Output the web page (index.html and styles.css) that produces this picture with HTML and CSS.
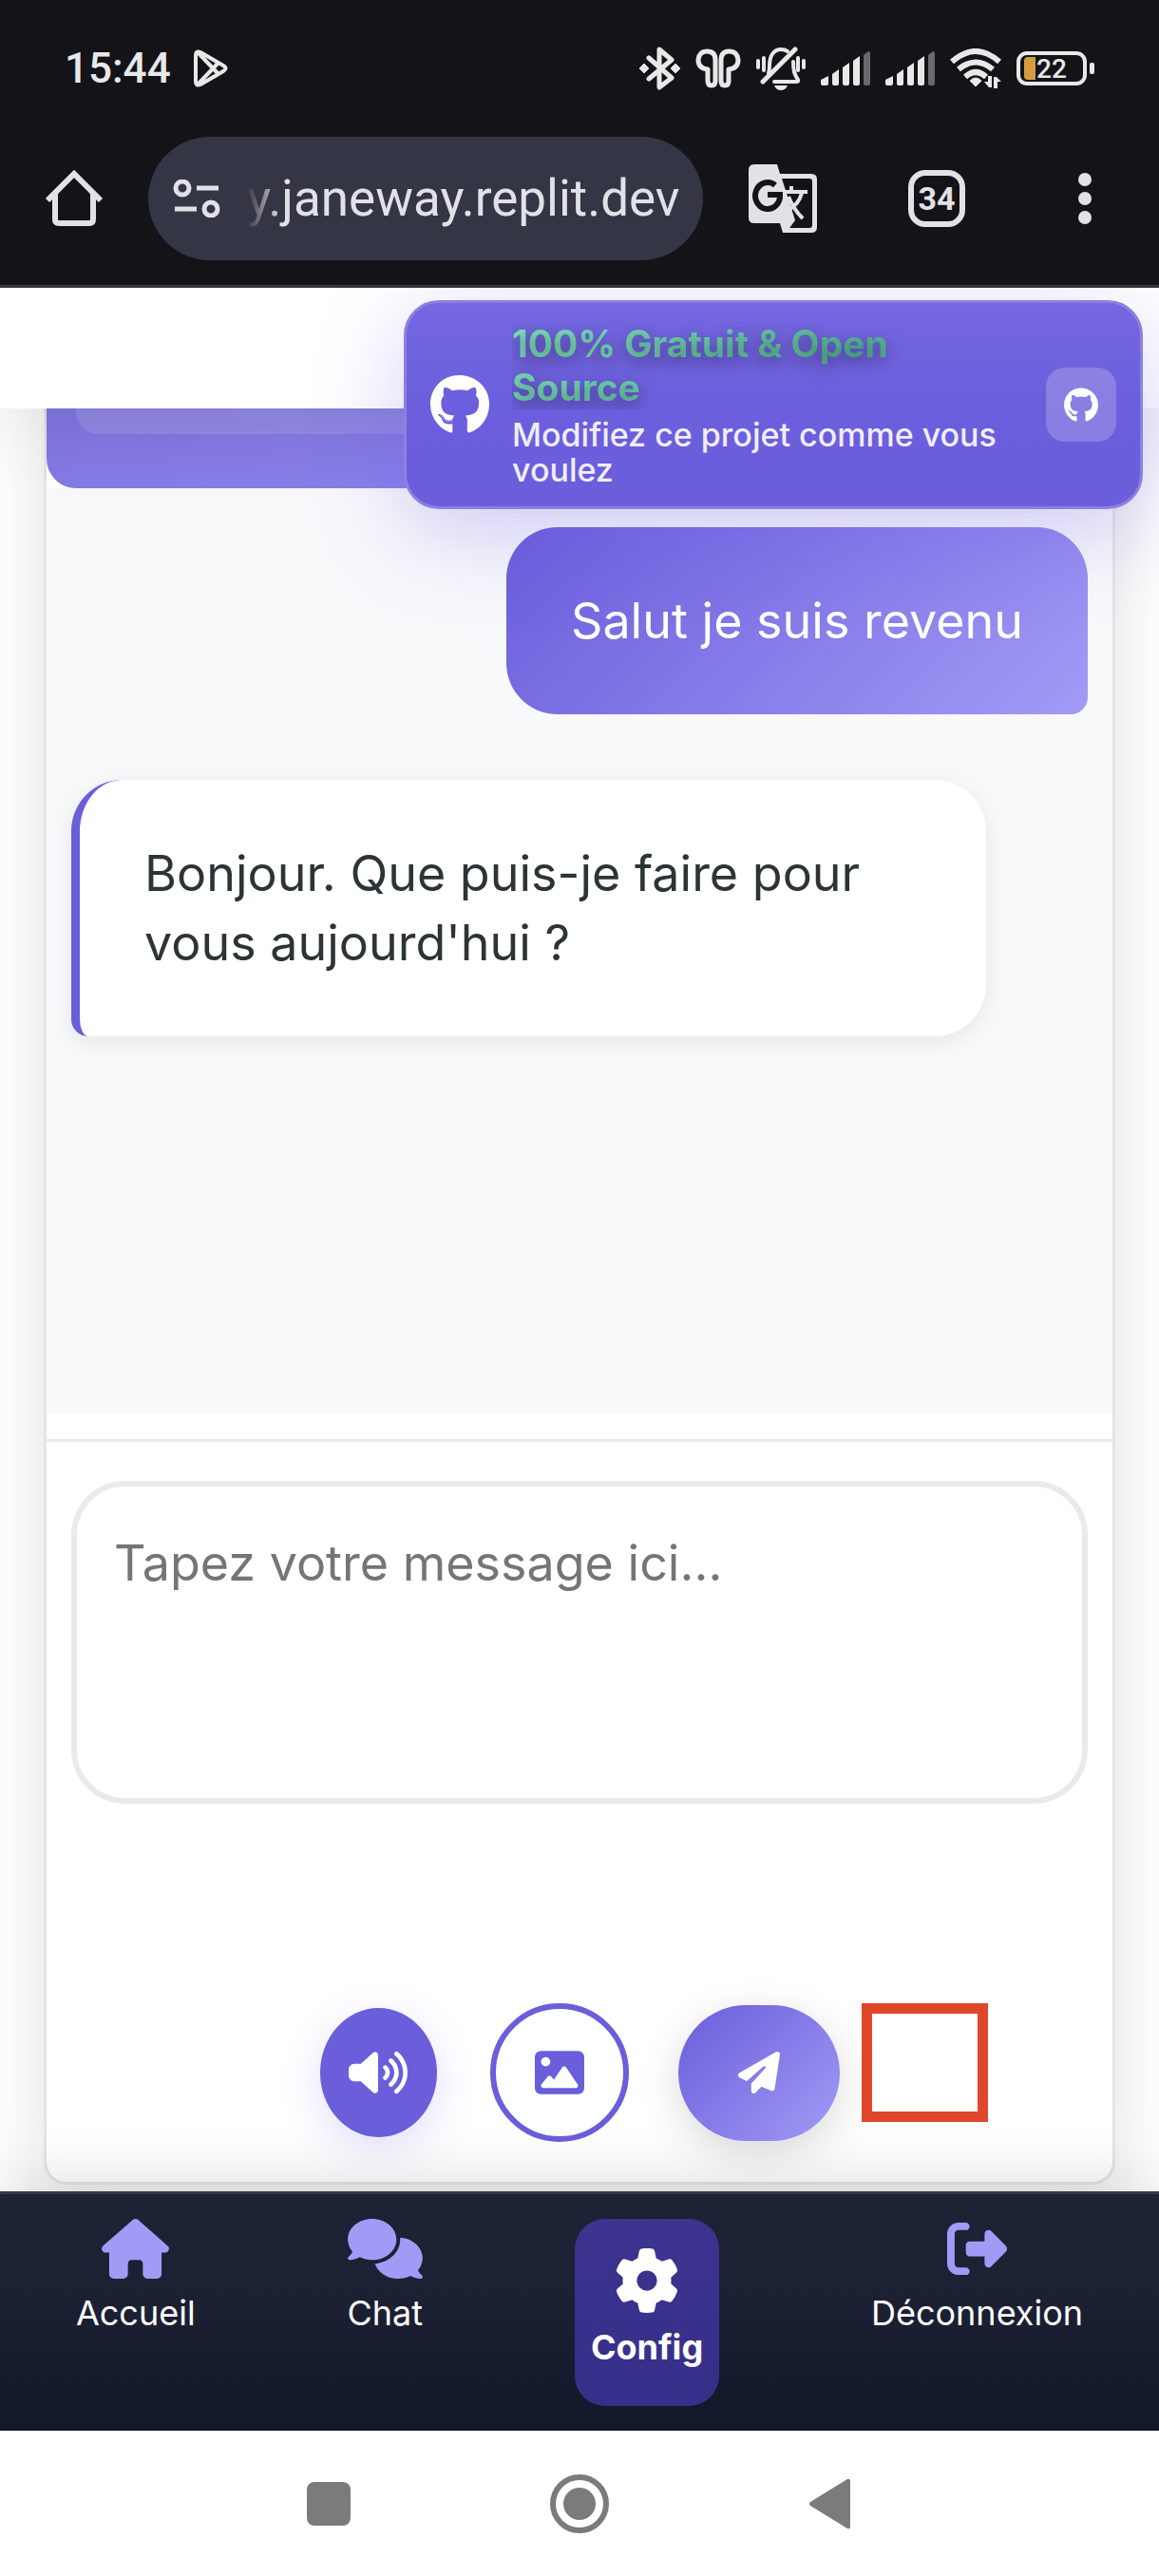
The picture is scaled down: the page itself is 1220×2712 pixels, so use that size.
FILE: index.html
```html
<!DOCTYPE html>
<html lang="fr">
<head>
<meta charset="utf-8">
<meta name="viewport" content="width=device-width, initial-scale=1">
<title>Chat</title>
<link rel="stylesheet" href="styles.css">
</head>
<body>
<svg class="sprite" aria-hidden="true">
  <symbol id="github" viewBox="0 0 496 512"><path d="M165.9 397.4c0 2-2.3 3.6-5.2 3.6-3.3.3-5.6-1.3-5.6-3.6 0-2 2.3-3.6 5.2-3.6 3-.3 5.6 1.3 5.6 3.6zm-31.1-4.5c-.7 2 1.3 4.3 4.3 4.9 2.6 1 5.6 0 6.2-2s-1.3-4.3-4.3-5.2c-2.6-.7-5.5.3-6.2 2.3zm44.2-1.7c-2.9.7-4.9 2.6-4.6 4.9.3 2 2.9 3.3 5.9 2.6 2.9-.7 4.9-2.6 4.6-4.6-.3-1.9-3-3.2-5.9-2.9zM244.8 8C106.1 8 0 113.3 0 252c0 110.9 69.8 205.8 169.5 239.2 12.8 2.3 17.3-5.6 17.3-12.1 0-6.2-.3-40.4-.3-61.4 0 0-70 15-84.7-29.8 0 0-11.4-29.1-27.8-36.6 0 0-22.9-15.7 1.6-15.4 0 0 24.9 2 38.6 25.8 21.9 38.6 58.6 27.5 72.9 20.9 2.3-16 8.8-27.1 16-33.7-55.9-6.2-112.3-14.3-112.3-110.5 0-27.5 7.6-41.3 23.6-58.9-2.6-6.5-11.1-33.3 2.6-67.9 20.9-6.5 69 27 69 27 20-5.6 41.5-8.5 62.8-8.5s42.8 2.9 62.8 8.5c0 0 48.1-33.6 69-27 13.7 34.7 5.2 61.4 2.6 67.9 16 17.7 25.8 31.5 25.8 58.9 0 96.5-58.9 104.2-114.8 110.5 9.2 7.9 17 22.9 17 46.4 0 33.7-.3 75.4-.3 83.6 0 6.5 4.6 14.4 17.3 12.1C428.2 457.8 496 362.9 496 252 496 113.3 383.5 8 244.8 8zM97.2 352.9c-1.3 1-1 3.3.7 5.2 1.6 1.6 3.9 2.3 5.2 1 1.3-1 1-3.3-.7-5.2-1.6-1.6-3.9-2.3-5.2-1zm-10.8-8.1c-.7 1.3.3 2.9 2.3 3.9 1.6 1 3.6.7 4.3-.7.7-1.3-.3-2.9-2.3-3.9-2-.6-3.6-.3-4.3.7zm32.4 35.6c-1.6 1.3-1 4.3 1.3 6.2 2.3 2.3 5.2 2.6 6.5 1 1.3-1.3.7-4.3-1.3-6.2-2.2-2.3-5.2-2.6-6.5-1zm-11.4-14.7c-1.6 1-1.6 3.6 0 5.9 1.6 2.3 4.3 3.3 5.6 2.3 1.6-1.3 1.6-3.9 0-6.2-1.4-2.3-4-3.3-5.6-2z"/></symbol>
  <symbol id="signal" viewBox="0 0 52 36"><path d="M0 30l8-4v8q0 2-2 2H2q-2 0-2-2zM12 24l7-5v15q0 2-2 2h-3q-2 0-2-2zM23 17l7-5v22q0 2-2 2h-3q-2 0-2-2zM34 10l7-5v29q0 2-2 2h-3q-2 0-2-2z"/><path opacity=".4" d="M45 4l5-4q2 0 2 2v32q0 2-2 2h-3q-2 0-2-2z"/></symbol>
</svg>

<header class="status">
  <div class="status__left">
    <time class="status__time">15:44</time>
    <svg class="status__play" viewBox="0 0 36 40" fill="none" stroke="currentColor" stroke-width="4" stroke-linejoin="round" stroke-linecap="round"><path d="M2 6q0-5 5-3l24 14q5 3 0 6L7 37q-5 2-5-3zM4 3l21 22M4 37l21-22"/></svg>
  </div>
  <div class="status__icons">
    <svg width="43" height="46" viewBox="0 0 43 46"><path fill="none" stroke="currentColor" stroke-width="5" stroke-linejoin="round" stroke-linecap="round" d="M10 12l24 21-13 10V3l13 11L10 34"/><path d="M0 23l5-5 5 5-5 5zM33 23l5-5 5 5-5 5z" stroke="currentColor" stroke-width="1" stroke-linejoin="round"/></svg>
    <svg width="48" height="42" viewBox="0 0 48 42" fill="none" stroke="currentColor" stroke-width="5" stroke-linejoin="round"><path d="M13 22Q3 21 3 12 4 3 12 3q9 0 9 9v22q0 5-4 5t-4-5zM35 22q10-1 10-10Q44 3 36 3q-9 0-9 9v22q0 5 4 5t4-5z"/></svg>
    <svg width="52" height="46" viewBox="0 0 52 46" fill="none" stroke="currentColor" stroke-width="5" stroke-linecap="round" stroke-linejoin="round"><path d="M7 37L41 3"/><path stroke-width="4" d="M13 28q1-3 1-8C14 9 19 3 26 3q4 0 7 2M39 16c0 9 1 13 5 19q1 2-2 2H19"/><path stroke-width="4" d="M2 15v7M8 12v13M44 12v13M50 15v7"/><path fill="currentColor" stroke="none" d="M19 41h14q-2 5-7 5t-7-5z"/></svg>
    <svg width="52" height="36"><use href="#signal"/></svg>
    <svg width="52" height="36"><use href="#signal"/></svg>
    <svg width="54" height="42" viewBox="0 0 54 42"><path fill="none" stroke="currentColor" stroke-width="6" d="M2 14q25-22 50 0M9 22q18-15 36 0M16 30q11-10 22 0"/><path d="M27 40l-6-6q6-6 12 0z" stroke="currentColor" stroke-width="1" stroke-linejoin="round"/><path d="M44 29v12h-3l-5-6h4v-6zM46 42V30h3l5 5h-4v7z"/></svg>
    <svg width="82" height="36" viewBox="0 0 82 36"><rect x="2" y="2" width="70" height="32" rx="9" fill="none" stroke="currentColor" stroke-width="4"/><rect x="77" y="12" width="5" height="12" rx="2"/><path fill="#d59c3f" d="M12 6h8v24h-8q-4 0-4-4V10q0-4 4-4z"/><text class="battery" x="21" y="28">22</text></svg>
  </div>
</header>

<div class="toolbar">
  <button class="tool" type="button" aria-label="Accueil du navigateur"><svg width="60" height="60" viewBox="0 0 60 60" fill="none" stroke="currentColor" stroke-width="6"><path stroke-linejoin="round" d="M10 25v27q0 4 4 4h32q4 0 4-4V25"/><path d="M2 32L30 4l28 28"/></svg></button>
  <div class="address">
    <svg width="50" height="40" viewBox="0 0 50 40" fill="none" stroke="currentColor" stroke-width="5"><circle cx="10" cy="9" r="7"/><circle cx="40" cy="31" r="7"/><path d="M25 9h23M2 31h23"/></svg>
    <span class="address__url">y.janeway.replit.dev</span>
  </div>
  <div class="toolbar__actions">
    <button class="tool" type="button" aria-label="Traduire"><svg width="72" height="72" viewBox="0 0 72 72"><path d="M6 0h24l3 10h33q6 0 6 6v50q0 6-6 6H36l-3-10H6q-6 0-6-6V6q0-6 6-6z"/><path fill="#141318" d="M35 15h29q3 0 3 3v46q0 3-3 3H43l6-8z"/><path fill="none" stroke="#141318" stroke-width="6" d="M28 22a13 14 0 1 0 5 10H20"/><path fill="none" stroke="currentColor" stroke-width="4" d="M38 29h24M45 23v6M56 30q-3 12-14 18M42 34q5 13 15 23"/></svg></button>
    <button class="tool tool--tabs" type="button" aria-label="34 onglets">34</button>
    <button class="tool" type="button" aria-label="Menu"><svg width="60" height="60" viewBox="0 0 60 60"><circle cx="30" cy="10" r="7"/><circle cx="30" cy="30" r="7"/><circle cx="30" cy="50" r="7"/></svg></button>
  </div>
</div>

<main class="app">
  <div class="app__bar"></div>
  <aside class="toast">
    <svg class="toast__logo" width="62" height="64"><use href="#github"/></svg>
    <div class="toast__text">
      <strong class="toast__title">100% Gratuit &amp; Open Source</strong>
      <span class="toast__sub">Modifiez ce projet comme vous voulez</span>
    </div>
    <a class="toast__link" href="#" aria-label="GitHub"><svg width="36" height="37"><use href="#github"/></svg></a>
  </aside>

  <section class="card">
    <div class="banner"><div class="banner__panel"></div></div>
    <div class="messages">
      <p class="bubble bubble--user">Salut je suis revenu</p>
      <p class="bubble bubble--bot">Bonjour. Que puis-je faire pour vous aujourd'hui ?</p>
    </div>
    <form class="composer">
      <textarea class="composer__input" aria-label="Message" placeholder="Tapez votre message ici..."></textarea>
      <div class="composer__row">
        <div class="composer__media">
          <button class="round round--voice" type="button" aria-label="Son"><svg width="62" height="50" viewBox="0 0 640 512"><path d="M533.6 32.5C598.5 85.2 640 165.8 640 256s-41.5 170.7-106.4 223.5c-10.3 8.4-25.4 6.8-33.8-3.5s-6.8-25.4 3.5-33.8C557.5 398.2 592 331.2 592 256s-34.5-142.2-88.7-186.3c-10.3-8.4-11.8-23.5-3.5-33.8s23.5-11.8 33.8-3.5zM473.1 107c43.2 35.2 70.9 88.9 70.9 149s-27.7 113.8-70.9 149c-10.3 8.4-25.4 6.8-33.8-3.5s-6.8-25.4 3.5-33.8C475.3 341.3 496 301.1 496 256s-20.7-85.3-53.2-111.8c-10.3-8.4-11.8-23.5-3.5-33.8s23.5-11.8 33.8-3.5zm-60.5 74.5C434.1 199.1 448 225.9 448 256s-13.9 56.9-35.4 74.5c-10.3 8.4-25.4 6.8-33.8-3.5s-6.8-25.4 3.5-33.8C393.1 284.4 400 271 400 256s-6.9-28.4-17.7-37.3c-10.3-8.4-11.8-23.5-3.5-33.8s23.5-11.8 33.8-3.5zM301.1 34.8C312.6 40 320 51.4 320 64V448c0 12.6-7.4 24-18.9 29.2s-25 3.1-34.4-5.3L131.8 352H64c-35.3 0-64-28.7-64-64V224c0-35.3 28.7-64 64-64h67.8L266.7 40.1c9.4-8.4 22.9-10.4 34.4-5.3z"/></svg></button>
          <button class="round round--image" type="button" aria-label="Image"><svg width="52" height="52" viewBox="0 0 512 512"><path d="M0 96C0 60.7 28.7 32 64 32H448c35.3 0 64 28.7 64 64V416c0 35.3-28.7 64-64 64H64c-35.3 0-64-28.7-64-64V96zM323.8 202.5c-4.5-6.6-11.9-10.5-19.8-10.5s-15.4 3.9-19.8 10.5l-87 127.6L170.7 297c-4.6-5.7-11.5-9-18.7-9s-14.2 3.3-18.7 9l-64 80c-5.8 7.2-6.9 17.1-2.9 25.4s12.4 13.6 21.6 13.6h96 32H424c8.9 0 17.1-4.9 21.2-12.8s3.6-17.4-1.4-24.7l-120-176zM112 192a48 48 0 1 0 0-96 48 48 0 1 0 0 96z"/></svg></button>
        </div>
        <button class="round round--send" type="submit" aria-label="Envoyer"><svg width="44" height="44" viewBox="0 0 512 512"><path d="M498.1 5.6c10.1 7 15.4 19.1 13.5 31.2l-64 416c-1.5 9.7-7.4 18.2-16 23s-18.9 5.4-28 1.6L284 427.7l-68.5 74.1c-8.9 9.7-22.9 12.9-35.2 8.1S160 493.2 160 480V396.4c0-4 1.5-7.8 4.2-10.7L331.8 202.8c5.8-6.3 5.6-16-.4-22s-15.7-6.4-22-.7L106 360.8 17.7 316.6C7.1 311.3 .3 300.7 0 288.9s5.9-22.8 16.1-28.7l448-256c10.7-6.1 23.9-5.5 34 1.4z"/></svg><span class="marker"></span></button>
      </div>
    </form>
  </section>
</main>

<nav class="tabs">
  <a class="tab" href="#"><svg width="71" height="63" viewBox="0 0 576 512"><path d="M575.8 255.5c0 18-15 32.1-32 32.1h-32l.7 160.2c0 2.7-.2 5.4-.5 8.1V472c0 22.1-17.9 40-40 40H456c-1.1 0-2.2 0-3.3-.1c-1.4 .1-2.8 .1-4.2 .1H416 392c-22.1 0-40-17.9-40-40V448 384c0-17.7-14.3-32-32-32H256c-17.7 0-32 14.3-32 32v64 24c0 22.1-17.9 40-40 40H160 128.1c-1.5 0-3-.1-4.5-.2c-1.2 .1-2.4 .2-3.6 .2H104c-22.1 0-40-17.9-40-40V360c0-.9 0-1.9 .1-2.8V287.6H32c-18 0-32-14-32-32.1c0-9 3-17 10-24L266.4 8c7-7 15-8 22-8s15 2 21 7L564.8 231.5c8 7 12 15 11 24z"/></svg><span>Accueil</span></a>
  <a class="tab" href="#"><svg width="79" height="63" viewBox="0 0 640 512"><path d="M208 352c114.9 0 208-78.8 208-176S322.9 0 208 0S0 78.8 0 176c0 38.6 14.7 74.3 39.6 103.4c-3.5 9.4-8.7 17.7-14.2 24.7c-4.8 6.2-9.7 11-13.3 14.3c-1.8 1.6-3.3 2.9-4.3 3.7c-.5 .4-.9 .7-1.1 .8l-.2 .2C1 327.2-1.4 334.4 .8 340.9S9.1 352 16 352c21.8 0 43.8-5.6 62.1-12.5c9.2-3.5 17.8-7.4 25.2-11.4C134.1 343.3 169.8 352 208 352zM448 176c0 112.3-99.1 196.9-216.5 207C255.8 457.4 336.4 512 432 512c38.2 0 73.9-8.7 104.7-23.9c7.5 4 16 7.9 25.2 11.4c18.3 6.9 40.3 12.5 62.1 12.5c6.9 0 13.1-4.5 15.2-11.1c2.1-6.6-.2-13.8-5.8-17.9l-.2-.2c-.2-.2-.6-.4-1.1-.8c-1-.8-2.5-2-4.3-3.7c-3.6-3.3-8.5-8.1-13.3-14.3c-5.5-7-10.7-15.4-14.2-24.7c24.9-29 39.6-64.7 39.6-103.4c0-92.8-84.9-168.9-192.6-175.5c.4 5.1 .6 10.3 .6 15.5z"/></svg><span>Chat</span></a>
  <a class="tab tab--active" href="#" aria-current="page"><svg width="68" height="68" viewBox="0 0 512 512"><path d="M495.9 166.6c3.2 8.7 .5 18.4-6.4 24.6l-43.3 39.4c1.1 8.3 1.7 16.8 1.7 25.4s-.6 17.1-1.7 25.4l43.3 39.4c6.9 6.2 9.6 15.9 6.4 24.6c-4.4 11.9-9.7 23.3-15.8 34.3l-4.7 8.1c-6.6 11-14 21.4-22.1 31.2c-5.9 7.2-15.7 9.6-24.5 6.8l-55.7-17.7c-13.4 10.3-28.2 18.9-44 25.4l-12.5 57.1c-2 9.1-9 16.3-18.2 17.8c-13.8 2.3-28 3.5-42.5 3.5s-28.7-1.2-42.5-3.5c-9.2-1.5-16.2-8.7-18.2-17.8l-12.5-57.1c-15.8-6.5-30.6-15.1-44-25.4L83.1 425.9c-8.8 2.8-18.6 .3-24.5-6.8c-8.1-9.8-15.5-20.2-22.1-31.2l-4.7-8.1c-6.1-11-11.4-22.4-15.8-34.3c-3.2-8.7-.5-18.4 6.4-24.6l43.3-39.4C64.6 273.1 64 264.6 64 256s.6-17.1 1.7-25.4L22.4 191.2c-6.9-6.2-9.6-15.9-6.4-24.6c4.4-11.9 9.7-23.3 15.8-34.3l4.7-8.1c6.6-11 14-21.4 22.1-31.2c5.9-7.2 15.7-9.6 24.5-6.8l55.7 17.7c13.4-10.3 28.2-18.9 44-25.4l12.5-57.1c2-9.1 9-16.3 18.2-17.8C227.3 1.2 241.5 0 256 0s28.7 1.2 42.5 3.5c9.2 1.5 16.2 8.7 18.2 17.8l12.5 57.1c15.8 6.5 30.6 15.1 44 25.4l55.7-17.7c8.8-2.8 18.6-.3 24.5 6.8c8.1 9.8 15.5 20.2 22.1 31.2l4.7 8.1c6.1 11 11.4 22.4 15.8 34.3zM256 336a80 80 0 1 0 0-160 80 80 0 1 0 0 160z"/></svg><span>Config</span></a>
  <a class="tab" href="#"><svg width="63" height="63" viewBox="0 0 512 512"><path d="M377.9 105.9L500.7 228.7c7.2 7.2 11.3 17.1 11.3 27.3s-4.1 20.1-11.3 27.3L377.9 406.1c-6.4 6.4-15 9.9-24 9.9c-18.7 0-33.9-15.2-33.9-33.9l0-62.1-128 0c-17.7 0-32-14.3-32-32l0-64c0-17.7 14.3-32 32-32l128 0 0-62.1c0-18.7 15.2-33.9 33.9-33.9c9 0 17.6 3.6 24 9.9zM160 96L96 96c-17.7 0-32 14.3-32 32l0 256c0 17.7 14.3 32 32 32l64 0c17.7 0 32 14.3 32 32s-14.3 32-32 32l-64 0c-53 0-96-43-96-96L0 128C0 75 43 32 96 32l64 0c17.7 0 32 14.3 32 32s-14.3 32-32 32z"/></svg><span>Déconnexion</span></a>
</nav>

<footer class="system">
  <button class="system__key" type="button" aria-label="Applications récentes"><svg width="64" height="64" viewBox="0 0 64 64"><rect x="9" y="9" width="46" height="46" rx="8"/></svg></button>
  <button class="system__key" type="button" aria-label="Écran d'accueil"><svg width="64" height="64" viewBox="0 0 64 64"><circle cx="32" cy="32" r="28" fill="none" stroke="currentColor" stroke-width="6"/><circle cx="32" cy="32" r="17"/></svg></button>
  <button class="system__key" type="button" aria-label="Retour"><svg width="64" height="64" viewBox="0 0 64 64"><path d="M11 30L50 6q3-1 3 2v48q0 3-3 2L11 34q-2-2 0-4z"/></svg></button>
</footer>
</body>
</html>
```
FILE: styles.css
```css
*, *::before, *::after { box-sizing: border-box; }

body {
  margin: 0;
  min-height: 100vh;
  display: flex;
  flex-direction: column;
  background: #fff;
  color: #2d3436;
  font-family: Inter, "Liberation Sans", sans-serif;
}

button {
  display: flex;
  align-items: center;
  justify-content: center;
  padding: 0;
  border: 0;
  background: none;
  color: inherit;
  font: inherit;
}

a { color: inherit; text-decoration: none; }
svg { display: block; fill: currentColor; flex: none; }
svg[fill="none"] { fill: none; }
.sprite { position: absolute; width: 0; height: 0; }

/* Phone status bar */
.status {
  position: relative;
  z-index: 3;
  display: flex;
  align-items: center;
  justify-content: space-between;
  height: 144px;
  padding: 0 68px;
  background: #141318;
  color: #e8e8e8;
  font-family: Roboto, "Liberation Sans", sans-serif;
}
.status__left { display: flex; align-items: center; gap: 24px; }
.status__time { font-size: 44px; line-height: 52px; font-weight: 500; }
.status__play { width: 36px; height: 40px; }
.status__icons { display: flex; align-items: center; gap: 16px; }
.battery { font-size: 28px; font-weight: 500; }

/* Browser toolbar */
.toolbar {
  position: relative;
  z-index: 3;
  display: flex;
  align-items: center;
  gap: 48px;
  padding: 0 48px 26px;
  border-bottom: 3px solid #35343a;
  background: #141318;
  color: #e3e1e8;
  font-family: Roboto, "Liberation Sans", sans-serif;
}
.address {
  flex: 1;
  min-width: 0;
  display: flex;
  align-items: center;
  gap: 28px;
  height: 130px;
  padding: 0 20px 0 26px;
  border-radius: 65px;
  background: #353645;
}
.address__url {
  flex: 1;
  min-width: 0;
  font-size: 53px;
  line-height: 64px;
  white-space: nowrap;
  -webkit-mask-image: linear-gradient(90deg, transparent, #000 36px);
  mask-image: linear-gradient(90deg, transparent, #000 36px);
}
.toolbar__actions { display: flex; align-items: center; gap: 96px; }
.tool--tabs {
  width: 60px;
  height: 60px;
  border: 6px solid currentColor;
  border-radius: 18px;
  font-size: 34px;
  font-weight: 700;
}

/* Web app */
.app {
  position: relative;
  flex: 1;
  display: flex;
  flex-direction: column;
  padding-bottom: 7px;
}
.app__bar {
  position: relative;
  z-index: 1;
  height: 127px;
  background: #fff;
  box-shadow: 0 12px 90px rgba(0, 0, 0, .12);
  clip-path: inset(0 0 -120px);
}
.toast {
  position: absolute;
  z-index: 2;
  top: 13px;
  right: 17px;
  display: flex;
  align-items: center;
  gap: 24px;
  width: 778px;
  padding: 20px 25px;
  border: 3px solid #8d80e1;
  border-radius: 37px;
  background: linear-gradient(#7467df, #6c5fdd 50%, #6b5edb);
  color: #fff;
  box-shadow: 0 24px 96px rgba(108, 92, 231, .3);
}
.toast__text { flex: 1; min-width: 0; display: flex; flex-direction: column; gap: 8px; }
.toast__title {
  overflow: hidden;
  font-size: 39px;
  line-height: 46px;
  font-weight: 700;
  color: transparent;
  background: linear-gradient(135deg, #80e8c0, #40a080);
  -webkit-background-clip: text;
  background-clip: text;
  text-shadow: 0 6px 18px rgba(0, 0, 0, .4);
}
.toast__sub { font-size: 34px; line-height: 37px; font-weight: 500; color: #f0eefc; }
.toast__link {
  display: flex;
  align-items: center;
  justify-content: center;
  width: 74px;
  height: 78px;
  border-radius: 20px;
  background: rgba(255, 255, 255, .2);
}

.card {
  flex: 1;
  display: flex;
  flex-direction: column;
  margin: 0 46px;
  border: 3px solid #e4e5e5;
  border-top: 0;
  border-radius: 0 0 24px 24px;
  background: #fff;
  box-shadow: 0 0 75px rgba(0, 0, 0, .12);
}
.banner {
  height: 84px;
  padding: 0 31px;
  border-radius: 0 0 31px 31px;
  background: linear-gradient(165deg, #8277e2, #9188f0);
}
.banner__panel { height: 27px; border-radius: 0 0 24px 24px; background: rgba(255, 255, 255, .12); }

.messages {
  flex: 1;
  display: flex;
  flex-direction: column;
  align-items: flex-start;
  gap: 69px;
  padding: 41px 26px;
  background: #f8f9fb;
}
.bubble {
  margin: 0;
  max-width: 90%;
  padding: 62px 68px;
  font-size: 52px;
  line-height: 73px;
}
.bubble--user {
  align-self: flex-end;
  border-radius: 54px 54px 18px 54px;
  background: linear-gradient(135deg, #6a5ddb, #a29bf6);
  color: #fff;
}
.bubble--bot {
  width: 963px;
  border-left: 9px solid #6a5edb;
  border-radius: 54px 54px 54px 18px;
  background: #fff;
  box-shadow: 0 6px 24px rgba(0, 0, 0, .08);
}

.composer {
  margin-top: 26px;
  padding: 41px 26px 42px;
  border-top: 3px solid #ebebeb;
}
.composer__input {
  display: block;
  width: 100%;
  height: 340px;
  padding: 44px 39px;
  border: 6px solid #eaeaea;
  border-radius: 57px;
  background: #fff;
  color: inherit;
  font: 52px/73px Inter, "Liberation Sans", sans-serif;
  resize: none;
}
.composer__input::placeholder { color: #757575; opacity: 1; }
.composer__row {
  display: flex;
  align-items: center;
  justify-content: center;
  gap: 52px;
  margin-top: 210px;
}
.composer__media { display: flex; align-items: center; gap: 56px; }
.round { border-radius: 50%; color: #fff; }
.round--voice { width: 123px; height: 136px; background: #6a5edb; box-shadow: 0 12px 45px rgba(108, 92, 231, .2); }
.round--image { width: 146px; height: 146px; border: 6px solid #6a5edb; background: #fff; color: #6a5edb; }
.round--send {
  position: relative;
  width: 170px;
  height: 143px;
  border-radius: 72px;
  background: linear-gradient(135deg, #6a5ddb, #a29bf6);
  box-shadow: 0 12px 45px rgba(0, 0, 0, .15);
}
/* Red frame drawn beside the send button */
.marker {
  position: absolute;
  left: 193px;
  top: -2px;
  width: 133px;
  height: 125px;
  border: 11px solid #e0472a;
}

/* App navigation */
.tabs {
  position: relative;
  z-index: 1;
  display: flex;
  align-items: flex-start;
  justify-content: space-around;
  height: 252px;
  padding-top: 26px;
  border-top: 3px solid #353a48;
  background: linear-gradient(#1d2234, #1c2033 45%, #14192b 85%, #12172a);
  box-shadow: 0 -12px 60px rgba(0, 0, 0, .13);
  color: #fff;
}
.tab {
  display: flex;
  flex-direction: column;
  align-items: center;
  gap: 14px;
  font-size: 36px;
  line-height: 44px;
}
.tab svg { color: #a29bf6; }
.tab--active {
  height: 197px;
  padding: 31px 17px 0;
  border-radius: 32px;
  background: linear-gradient(#3c348f, #362f88);
  font-weight: 700;
}
.tab--active svg { color: #fff; }

/* Phone navigation keys */
.system {
  position: relative;
  z-index: 2;
  display: flex;
  align-items: center;
  justify-content: center;
  gap: 200px;
  height: 153px;
  background: #fff;
  color: #7b7b7b;
}
```
